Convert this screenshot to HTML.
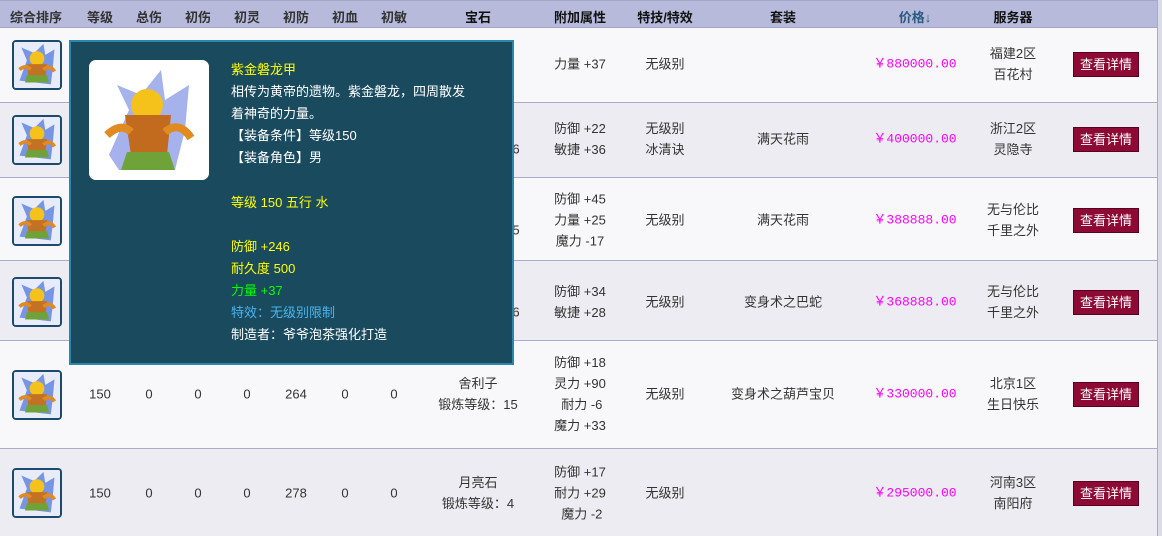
<!DOCTYPE html>
<html><head><meta charset="utf-8"><style>
*{margin:0;padding:0;box-sizing:border-box}
body{width:1162px;height:536px;overflow:hidden;background:#f8f8fa;font-family:"Liberation Sans","WenQuanYi Zen Hei","Noto Sans CJK SC",sans-serif;font-size:13px;color:#333;position:relative}
.hdr{position:absolute;left:0;top:0;width:1162px;height:28px;background:#b7badb;border-top:1px solid #a3a6c8;border-bottom:1px solid #a3a6c8}
.h{position:absolute;top:7px;font-weight:bold;font-size:13px;color:#333;transform:translateX(-50%);white-space:nowrap}
.row{position:absolute;left:0;width:1157px;border-bottom:1px solid #a9abc8}
.c{position:absolute;transform:translate(-50%,-50%);text-align:center;white-space:nowrap;line-height:21px}
.p{color:#f0f;font-family:"Liberation Mono","WenQuanYi Zen Hei",monospace;font-size:13px}
.btn{position:absolute;left:1073px;width:66px;height:25px;background:#8d0a35;border:1px solid #5a0020;color:#fff;text-align:center;line-height:23px;font-size:13px}
.ic{position:absolute;left:12px;width:50px;height:50px;border:2px solid #1b4a6c;border-radius:4px;background:#fff;overflow:hidden}
.vr{position:absolute;left:1157px;top:0;width:5px;height:536px;background:#dcdce8;border-left:1px solid #a9abc8}
.tip{position:absolute;left:69px;top:40px;width:445px;height:325px;background:#1a4a5e;border:2px solid #2a86aa}
.tip .img{position:absolute;left:18px;top:18px;width:120px;height:120px;background:#fff;border-radius:7px}
.tip .t{position:absolute;left:160px;line-height:22px;font-size:13px;color:#fff;white-space:nowrap}
</style></head><body>
<svg width="0" height="0" style="position:absolute"><defs>
<g id="arm">
<rect width="50" height="50" fill="#e8ecfa"/>
<path d="M6 42 L14 20 L8 6 L22 12 L32 2 L34 14 L44 8 L42 30 L40 46 Z" fill="#5a7fe0" opacity=".8"/>
<circle cx="25" cy="18" r="8" fill="#f4c21a"/>
<path d="M14 24 L36 24 L34 40 L16 40 Z" fill="#c27222"/>
<path d="M14 36 L36 36 L38 44 L12 44 Z" fill="#6fa33a"/>
<path d="M6 30 Q13 24 18 30 M32 30 Q39 24 44 32" stroke="#e08a20" stroke-width="4" fill="none"/>
</g></defs></svg>
<div class="hdr"></div>
<div class="h" style="left:36px">综合排序</div><div class="h" style="left:100px">等级</div><div class="h" style="left:149px">总伤</div><div class="h" style="left:198px">初伤</div><div class="h" style="left:247px">初灵</div><div class="h" style="left:296px">初防</div><div class="h" style="left:345px">初血</div><div class="h" style="left:394px">初敏</div>
<div class="h" style="left:478px;color:#111">宝石</div><div class="h" style="left:580px;color:#111">附加属性</div><div class="h" style="left:665px;color:#111">特技/特效</div><div class="h" style="left:783px;color:#111">套装</div><div class="h" style="left:915px;color:#2a5a80">价格↓</div><div class="h" style="left:1013px;color:#111">服务器</div>

<div class="row" style="top:28px;height:75px;background:#f8f8fa"></div>
<div class="row" style="top:103px;height:75px;background:#ececf2"></div>
<div class="row" style="top:178px;height:83px;background:#f8f8fa"></div>
<div class="row" style="top:261px;height:80px;background:#ececf2"></div>
<div class="row" style="top:341px;height:108px;background:#f8f8fa"></div>
<div class="row" style="top:449px;height:87px;background:#ececf2;border:none"></div>
<div class="vr"></div>

<svg class="ic" style="top:40px" viewBox="0 0 50 50"><use href="#arm"/></svg>
<svg class="ic" style="top:115px" viewBox="0 0 50 50"><use href="#arm"/></svg>
<svg class="ic" style="top:196px" viewBox="0 0 50 50"><use href="#arm"/></svg>
<svg class="ic" style="top:277px" viewBox="0 0 50 50"><use href="#arm"/></svg>
<svg class="ic" style="top:370px" viewBox="0 0 50 50"><use href="#arm"/></svg>
<svg class="ic" style="top:468px" viewBox="0 0 50 50"><use href="#arm"/></svg>

<div class="c" style="left:580px;top:64px">力量 +37</div><div class="c" style="left:665px;top:64px">无级别</div><div class="c p" style="left:915px;top:64px">￥880000.00</div><div class="c" style="left:1013px;top:64px">福建2区<br>百花村</div><div class="btn" style="top:52px">查看详情</div>
<div class="c" style="left:516px;top:149px">6</div>
<div class="c" style="left:580px;top:139px">防御 +22<br>敏捷 +36</div><div class="c" style="left:665px;top:139px">无级别<br>冰清诀</div><div class="c" style="left:783px;top:139px">满天花雨</div><div class="c p" style="left:915px;top:139px">￥400000.00</div><div class="c" style="left:1013px;top:139px">浙江2区<br>灵隐寺</div><div class="btn" style="top:127px">查看详情</div>
<div class="c" style="left:516px;top:230px">5</div>
<div class="c" style="left:580px;top:220px">防御 +45<br>力量 +25<br>魔力 -17</div><div class="c" style="left:665px;top:220px">无级别</div><div class="c" style="left:783px;top:220px">满天花雨</div><div class="c p" style="left:915px;top:220px">￥388888.00</div><div class="c" style="left:1013px;top:220px">无与伦比<br>千里之外</div><div class="btn" style="top:208px">查看详情</div>
<div class="c" style="left:516px;top:312px">6</div>
<div class="c" style="left:580px;top:302px">防御 +34<br>敏捷 +28</div><div class="c" style="left:665px;top:302px">无级别</div><div class="c" style="left:783px;top:302px">变身术之巴蛇</div><div class="c p" style="left:915px;top:302px">￥368888.00</div><div class="c" style="left:1013px;top:302px">无与伦比<br>千里之外</div><div class="btn" style="top:290px">查看详情</div>
<div class="c" style="left:100px;top:394px">150</div><div class="c" style="left:149px;top:394px">0</div><div class="c" style="left:198px;top:394px">0</div><div class="c" style="left:247px;top:394px">0</div><div class="c" style="left:296px;top:394px">264</div><div class="c" style="left:345px;top:394px">0</div><div class="c" style="left:394px;top:394px">0</div>
<div class="c" style="left:478px;top:394px">舍利子<br>锻炼等级：15</div>
<div class="c" style="left:580px;top:394px">防御 +18<br>灵力 +90<br>&nbsp;耐力 -6<br>魔力 +33</div><div class="c" style="left:665px;top:394px">无级别</div><div class="c" style="left:783px;top:394px">变身术之葫芦宝贝</div><div class="c p" style="left:915px;top:394px">￥330000.00</div><div class="c" style="left:1013px;top:394px">北京1区<br>生日快乐</div><div class="btn" style="top:382px">查看详情</div>
<div class="c" style="left:100px;top:493px">150</div><div class="c" style="left:149px;top:493px">0</div><div class="c" style="left:198px;top:493px">0</div><div class="c" style="left:247px;top:493px">0</div><div class="c" style="left:296px;top:493px">278</div><div class="c" style="left:345px;top:493px">0</div><div class="c" style="left:394px;top:493px">0</div>
<div class="c" style="left:478px;top:493px">月亮石<br>锻炼等级：4</div>
<div class="c" style="left:580px;top:493px">防御 +17<br>耐力 +29<br>&nbsp;魔力 -2</div><div class="c" style="left:665px;top:493px">无级别</div><div class="c p" style="left:915px;top:493px">￥295000.00</div><div class="c" style="left:1013px;top:493px">河南3区<br>南阳府</div><div class="btn" style="top:481px">查看详情</div>

<div class="tip">
<svg class="img" viewBox="0 0 120 120"><rect width="120" height="120" rx="7" fill="#fff"/>
<path d="M20 95 L40 50 L28 25 L52 35 L72 10 L76 40 L100 25 L96 70 L86 110 L30 110 Z" fill="#6a7fe0" opacity=".6"/>
<circle cx="58" cy="45" r="16" fill="#f4c21a"/>
<path d="M36 55 L82 55 L78 95 L42 95 Z" fill="#c26a1e"/>
<path d="M38 92 L80 92 L86 110 L32 110 Z" fill="#6fa33a"/>
<path d="M18 75 Q32 62 42 72 M76 72 Q90 60 102 78" stroke="#e08a20" stroke-width="8" fill="none"/>
</svg>
<div class="t" style="top:17px;color:#ff0">紫金磐龙甲</div>
<div class="t" style="top:39px">相传为黄帝的遗物。紫金磐龙，四周散发<br>着神奇的力量。<br>【装备条件】等级150<br>【装备角色】男</div>
<div class="t" style="top:150px;color:#ff0">等级 150 五行 水</div>
<div class="t" style="top:194px;color:#ff0">防御 +246<br>耐久度 500</div>
<div class="t" style="top:238px;color:#0f0">力量 +37</div>
<div class="t" style="top:260px;color:#4ab4ee">特效：无级别限制</div>
<div class="t" style="top:282px">制造者：爷爷泡茶强化打造</div>
</div>
</body></html>
